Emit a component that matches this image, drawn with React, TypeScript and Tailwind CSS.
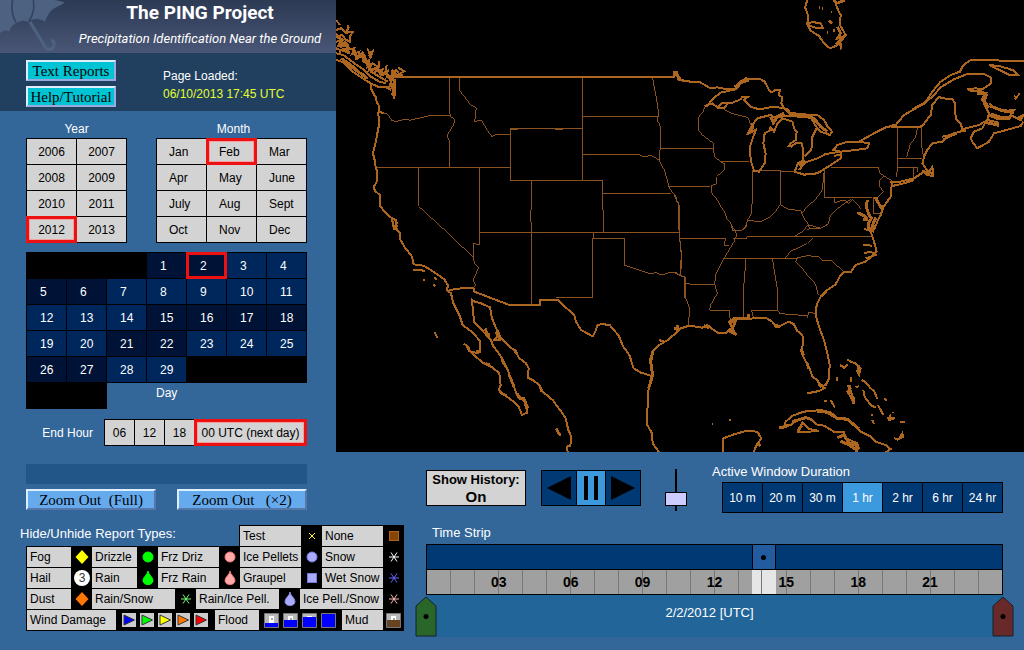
import { useState } from 'react';

const years = ['2006', '2007', '2008', '2009', '2010', '2011', '2012', '2013'];
const months = ['Jan', 'Feb', 'Mar', 'Apr', 'May', 'June', 'July', 'Aug', 'Sept', 'Oct', 'Nov', 'Dec'];
const days = Array.from({ length: 29 }, (_, i) => i + 1);
const quietDays = [1, 2, 5, 6, 15, 16, 17, 18, 21, 22, 26, 27];
const durations = ['10 m', '20 m', '30 m', '1 hr', '2 hr', '6 hr', '24 hr'];
const hours = Array.from({ length: 24 }, (_, i) => i + 1);

const picked =
  'relative z-10 border-2 border-[#ee1111] outline outline-[#ee1111] shadow-[inset_0_0_0_1px_#f4a0a0]';

function Header() {
  return (
    <header>
      <div className="relative h-[53px] overflow-hidden bg-linear-to-b from-[#2d3a54] to-[#495676] text-white">
        <svg className="absolute left-0 top-0" width="70" height="53" viewBox="0 0 210 159" aria-hidden="true">
          <g fill="#4d6180">
            <path d="M0 0H166L194 7C180 20 160 22 150 37C143 46 138 55 135 65C118 54 98 54 84 66C72 60 60 62 48 70C36 76 30 84 28 96C18 88 8 92 0 100Z" />
          </g>
          <path d="M38 0C32 28 38 50 48 68M100 0C104 26 98 48 86 64" fill="none" stroke="#35435f" strokeWidth="5" />
          <path d="M90 66L134 138C142 154 160 150 162 136C163 128 160 122 154 120" fill="none" stroke="#4d6180" strokeWidth="10" />
        </svg>
        <h1 className="relative whitespace-nowrap pl-16 text-center font-['Roboto','Liberation_Sans',sans-serif] text-[19px] font-bold leading-[26px]">
          The PING Project
        </h1>
        <p className="relative whitespace-nowrap pl-16 text-center font-['Roboto','Liberation_Sans',sans-serif] text-[13px] italic leading-[26px]">
          Precipitation Identification Near the Ground
        </p>
      </div>
      <div className="flex h-[58px] bg-[#21405f] pl-[26px] pt-[7px]">
        <div className="flex w-[90px] flex-col gap-[5px] font-['Liberation_Serif',serif] text-[15px] text-black">
          <button className="h-[21px] border-2 border-[#99aadd] border-l-[#ddeeff] border-t-[#ddeeff] bg-[#00c4d4] leading-[16px]">
            Text Reports
          </button>
          <button className="h-[21px] border-2 border-[#99aadd] border-l-[#ddeeff] border-t-[#ddeeff] bg-[#00c4d4] leading-[16px]">
            Help/Tutorial
          </button>
        </div>
        <div className="pl-[47px] pt-[7px] leading-[18px]">
          <p className="text-[12px] text-white">Page Loaded:</p>
          <p className="text-[12px] text-[#e4ff33]">06/10/2013 17:45 UTC</p>
        </div>
      </div>
    </header>
  );
}

function DatePicker() {
  const [year, setYear] = useState('2012');
  const [month, setMonth] = useState('Feb');
  const [day, setDay] = useState(2);

  return (
    <div className="px-[26px] pt-[9px] text-[12px]">
      <div className="flex gap-[29px]">
        <div>
          <h2 className="h-[18px] text-center leading-[18px] text-white">Year</h2>
          <div className="grid w-[101px] grid-cols-2 gap-px bg-black p-px">
            {years.map((y) => (
              <button
                key={y}
                onClick={() => setYear(y)}
                className={`h-[25px] bg-[#d3d3d3] text-center ${y === year ? picked : ''}`}
              >
                {y}
              </button>
            ))}
          </div>
        </div>
        <div>
          <h2 className="h-[18px] pl-1 text-center leading-[18px] text-white">Month</h2>
          <div className="grid w-[151px] grid-cols-3 gap-px bg-black p-px">
            {months.map((m) => (
              <button
                key={m}
                onClick={() => setMonth(m)}
                className={`h-[25px] bg-[#d3d3d3] text-left ${m === month ? `${picked} pl-[10px]` : 'pl-3'}`}
              >
                {m}
              </button>
            ))}
          </div>
        </div>
      </div>

      <div className="mt-[9px] grid w-[281px] grid-cols-7 gap-px bg-black p-px text-white">
        <span className="col-span-3" />
        {days.map((d) => (
          <button
            key={d}
            onClick={() => setDay(d)}
            className={`h-[25px] text-left ${quietDays.includes(d) ? 'bg-[#001236]' : 'bg-[#00275b]'} ${
              d === day ? 'relative z-10 border-2 border-[#ee1111] pl-[11px] outline outline-[#ee1111]' : 'pl-[13px]'
            }`}
          >
            {d}
          </button>
        ))}
      </div>
      <div className="flex">
        <div className="h-[26px] w-[81px] bg-black" />
        <h2 className="pl-[49px] leading-[20px] text-white">Day</h2>
      </div>

      <div className="mt-[10px] flex w-[281px] items-center justify-end">
        <span className="pr-[11px] text-white">End Hour</span>
        <div className="flex gap-px bg-black p-px">
          {['06', '12', '18'].map((h) => (
            <button key={h} className="h-[25px] w-[29px] bg-[#d3d3d3]">
              {h}
            </button>
          ))}
          <button className={`h-[25px] w-[111px] whitespace-nowrap bg-[#d3d3d3] ${picked}`}>00 UTC (next day)</button>
        </div>
      </div>
    </div>
  );
}

function UsMap() {
  return (
    <svg
      className="h-[452px] w-full bg-black"
      viewBox="0 0 688 452"
      preserveAspectRatio="xMidYMid slice"
      fill="none"
      stroke="#ad661f"
      shapeRendering="crispEdges"
      role="img"
      aria-label="Map of the United States"
    >
      {/* Northwest */}
      <g transform="scale(.33333)">
        <g stroke="#8a5220" strokeWidth="3">
          <path d="M130 338L152 342L160 350L168 362L182 364L208 357L222 361L280 347H341M341 231V340L345 350L357 358L352 375L333 408L341 425V501" />
          <path d="M371 231V272L385 290L405 315L421 323L416 365L437 360L444 374L455 392L468 410L480 404L514 402L523 404" />
          <path d="M523 385H739V541H523ZM523 388H545M658 388H682M119 502H523M248 502V619L326 690M431 502V690M739 231V385M739 349H967" />
          <path d="M739 463H910L920 470L945 467L960 473L970 482M949 231L955 262L962 300L969 345L963 360L972 374L973 445L970 460V482L985 510L995 545L1000 565L1020 590L1022 605L1031 616V690" />
          <path d="M973 445H1050M997 559H1050M800 580H1005M739 541H800V600L803 690M586 541V620L584 640L586 690" />
        </g>
        <g strokeWidth="6">
          <path d="M170 231H1014V215H1022L1026 228L1036 240L1050 243" />
          <path d="M106 250V268L113 282L120 292L122 306L130 320L127 338L129 375L124 400L119 428L111 460L117 485L119 502L124 515L122 545L113 562L117 573L132 585V618L150 640L168 655L180 660L182 680L178 690M168 655L174 690M174 655L184 672M130 335L142 340" />
          <path d="M0 180L20 186L50 215L80 235L104 250L130 262L160 262L166 240M0 160L22 165L55 190L85 210L105 230L130 245L150 250" />
          <path d="M15 175L45 195L75 222L95 236M25 182L60 212L88 228" strokeWidth="8" />
          <path d="M0 60L12 75M0 90L15 85L30 98L38 82L34 76M30 98L50 96L42 110V126L28 118L18 104L6 112L0 100M0 125L20 122L16 140L35 135L30 150L55 145L48 162L70 155L66 172L88 168L85 185L100 180L95 200L110 190L125 200L118 215L140 208L138 222L155 212L152 232L170 225L180 210L190 222L205 214L185 202M0 145L14 150L8 165M94 145L100 160L110 153L104 172L98 165M128 184L130 200L120 208M152 195L148 212M70 160L90 190L105 215L130 230L155 245" />
          <path d="M2 108L18 120L10 135L28 128L38 145L20 150L42 160M55 150L62 175L80 160L92 185L80 180M105 190L100 210L125 205L135 225L150 220L165 240L170 215L185 230L200 222" strokeWidth="9" />
          <path d="M162 235L176 240V262L174 296M166 250L172 270L170 282L176 290M150 262L165 268" strokeWidth="8" />
        </g>
      </g>

      {/* Northeast and Great Lakes */}
      <g transform="translate(338) scale(.33333)">
        <g stroke="#8a5220" strokeWidth="3">
          <path d="M92 320L88 335L73 352V390L85 405L118 430V445L122 470L140 485L153 492L152 508L128 530L126 552L112 557L114 580L130 600L140 620L152 635L158 655L172 672L175 690M0 445H118M0 559H108M140 485H226M150 328L172 340L205 348L222 353L230 375L240 382" />
          <path d="M235 513V600L232 640L220 662L215 680L205 690M235 512H320V612M320 514H362M220 662L262 664L290 650L305 635L318 614L345 628L380 632L390 655L405 675L440 685L462 672L470 645L485 630L515 608L530 598M0 582L5 595L15 612V690" />
          <path d="M385 640L397 622L425 598L445 570L451 510M451 510V592H595M470 502H612L618 520L630 528L618 540V560L628 575L610 592L598 594M630 528L655 543M482 594V608L510 600L525 610L535 598L550 612L562 628M598 592V640H618M400 690L410 685M672 385L670 420L672 470L668 532M672 475H745M668 502H730V515M718 502V530M742 378V430L748 470M730 384L725 410L708 435L698 472" />
        </g>
        <g strokeWidth="6">
          <path d="M0 215L10 230L14 240L50 245L75 245L110 265L130 262L150 266L185 268L190 255L215 235L240 238L260 238L272 245L285 270L292 277L305 270L318 270L315 285L325 292L322 310L330 325L348 338L385 343L430 345L450 360L460 378L474 395L468 405L440 395L425 378L415 360L410 345" />
          <path d="M185 268L140 278L115 298L100 318H92L115 310L130 322L145 308L170 310L200 298L205 290L222 290L210 300L218 308L230 320L255 328L300 320L330 325M130 322L150 325L160 312" />
          <path d="M220 405L235 375L250 355L290 345L300 352L320 350L345 348L410 352L430 370M225 400L245 390L228 440L230 480L240 512L255 515L272 490L275 460L268 430L272 400L290 390L288 380L300 395L310 372L325 355L355 365L360 385L368 395L365 420L350 430L345 438L352 440L365 430L383 430L388 450V480L372 490L362 515L390 524L430 520L470 495L500 475V455L455 462L430 475L395 487L375 510M392 470L412 450L415 410L428 385" />
          <path d="M222 395L238 385L235 370" />
          <path d="M335 325L350 342L390 348L420 355L440 380L460 395M185 268L200 248L225 240M182 262L208 240M378 500L390 478M290 350L298 368L310 350L330 340" strokeWidth="9" />
          <path d="M478 450L490 435L520 425L555 425L585 430L580 445L545 450L500 455ZM500 463L480 468M555 425L600 400L635 382L665 375L690 345L725 325L750 312L780 285L800 262L840 238L880 222L930 222L950 232L952 250L925 268L905 265L880 268" />
          <path d="M715 328L755 306L775 275L800 245L830 225L858 215L865 200L875 190L890 180L960 181L1050 184M945 195L975 198L1000 205L1020 212L1033 226L1005 224L980 212Z" />
          <path d="M650 382H730L745 378L758 360L770 345L775 315L795 290L805 295L835 297L843 310L845 355L860 370L865 388L875 395M640 382L660 374" />
          <path d="M875 390L840 400L820 408L805 425L775 430L760 450L750 470L745 490L755 505L765 515L775 500L778 528L760 525L750 515L720 535L680 545L652 545L655 558L690 550L720 540M652 560L650 590L628 622L615 612L608 592M628 622L620 645L612 660L600 690M805 410L830 405M808 418L850 400" />
          <path d="M602 592L615 615L624 630" />
          <path d="M580 600L577 620L583 640L592 655L584 670L582 690M550 638L566 645L580 655M568 658L582 660M606 652L598 668L592 690" strokeWidth="9" />
          <path d="M865 388L915 375L940 360L945 340L930 310L938 285L920 272L890 272L880 266M940 360L975 368L950 372L935 365L925 385L900 395L890 415L898 430L910 445L945 425L960 400L990 392L1040 378L1048 365M945 310L960 325L1000 332L1020 330L1010 345L1040 360L1048 345L1028 355M950 340L985 352L1010 350M1022 298L1038 280M1028 292L1020 288" />
          <path d="M945 345L970 355L1010 354M950 318L985 332L1020 338M938 368L975 376M745 515L778 520M910 280L935 280L925 300L945 322" strokeWidth="9" />
          <path d="M400 0L393 22L402 45L400 72L410 92L435 108L450 130L468 145L485 138L498 130L502 148M510 0L485 10L492 30L500 45L498 75L515 105L500 125M400 72L415 66L440 70L447 85L418 82Z" />
          <path d="M480 0L488 10L512 2M490 80L500 100L490 115L508 110L488 130L505 135M464 62L474 70M458 98h5M476 92h6M470 36h4M435 23h4M444 26h4" strokeWidth="8" />
        </g>
      </g>

      {/* Southwest, Baja and Texas */}
      <g transform="translate(0 225) scale(.33333)">
        <g stroke="#8a5220" strokeWidth="3">
          <path d="M431 22H1031M586 0V237M802 0V22M773 22V40M770 40H865V120L880 125L900 132L925 140L940 146L960 143L975 150L1000 143L1020 143L1035 152L1050 157M770 40V217H660" />
          <path d="M1047 157V220M1031 0V40L1037 90L1034 152M1031 40H1050M310 0L412 97L415 115L428 128L418 150L412 165L418 180L412 190M431 0V60L412 55V95" />
        </g>
        <g strokeWidth="6">
          <path d="M340 195L375 190L412 188L415 200L520 240H612V225H665L690 248L715 270L720 290L735 315L770 334L778 320L785 300L800 297L822 301L848 332L862 365L880 390L893 430L915 443L947 453" />
          <path d="M176 0L184 15L192 25V42L205 65L228 95L233 118L262 122L280 132L297 143L325 163L335 180L334 197L345 205L352 235L370 270L380 300L410 322L432 348V375L425 385L400 378L390 360L383 356M232 135L268 137M260 165h8M295 158L302 165M290 178L298 183M296 322L304 338" />
          <path d="M400 378L440 413L470 428L490 445L494 480L488 495L510 513L530 528L548 545L558 570L573 563L575 545L565 520L545 515L530 475L515 435L495 395L470 360L465 345L440 318L414 290L408 225M405 220L410 228L435 235L462 247L468 280L480 310L490 325L492 345L475 345L488 330L520 365L540 378L548 398L570 415L578 430L575 458L590 465L610 480L620 500L650 525L688 577L697 615L706 635L703 662L693 665L695 682" />
          <path d="M447 310L460 340M448 330L462 328M480 320L490 340M420 378L435 380M450 415L462 420M497 405L510 425M520 450L534 485M545 505L550 520L565 525L572 550M490 500L510 512M535 372L540 385M660 610L673 632M612 485L618 500M390 360L400 372" strokeWidth="8" />
          <path d="M1050 305L1035 310L1025 320L995 345L970 360L950 380L942 405L947 430L950 455L940 480L935 510L934 600L948 625L950 655L970 682M1022 300V315L1035 312M968 345L985 350" />
          <path d="M950 380L944 410L950 450L938 490" strokeWidth="9" />
        </g>
      </g>

      {/* Southeast, Cuba and the Bahamas */}
      <g transform="translate(338 225) scale(.33333)">
        <g stroke="#8a5220" strokeWidth="3">
          <path d="M17 0V40L22 90L18 152L0 143M17 40H155L150 60L165 62M0 22H17M18 152L34 157V215L48 255L42 300M34 176L60 178H122M172 0L182 15L188 30L180 50L165 75L150 100L125 150L122 178L130 205L110 240L107 256H166V278L175 285" />
          <path d="M150 100H370M178 40H218V36H595M175 15L200 18L215 8L218 0M216 100L208 200V275M295 100L312 205L310 256H232L238 275M310 256L318 266L400 272V278L404 262L422 265M358 36L385 20L402 0L410 12L440 10L460 0M415 40L400 55L370 70L350 78L335 98" />
          <path d="M370 100L365 110L385 130L400 150L425 178L433 210M370 98L400 92L435 95L445 105L475 108L508 140" />
        </g>
        <g strokeWidth="6">
          <path d="M0 330L15 315L10 300M15 312L45 302L85 308L100 300L115 312L135 325L155 325L168 312L185 330L175 310L165 290L180 280L200 282L245 280L275 278L295 290L305 305L320 302L345 290L360 298L370 318L385 330L388 350L382 380L390 400L405 425L415 455L430 465L440 485L455 480L465 460L467 420L460 385L450 345L435 305L425 270L428 240L440 215L460 195L485 178L500 150L512 140L530 142L545 120L575 110L608 80L600 50L592 25L585 0M455 488L435 498L400 505M600 0L598 20L570 12M568 60L595 62M570 85L590 80L605 90L575 100" />
          <path d="M0 310L15 312M90 302L105 308M165 295L185 285L180 300L170 320L188 330M185 282L225 280L222 268M382 370L388 392M398 412L405 430M300 300L318 305M435 478L450 485M440 215L455 200" strokeWidth="9" />
          <path d="M330 605L335 590L355 572L390 560L440 555L470 562L490 578L515 580L535 595L560 620L590 635L605 650L635 660L650 672L635 682M330 605L350 600L370 585L395 578L415 585L425 598L450 602L480 620L510 622L515 640L550 655L555 670L545 682M375 620L385 592L405 612L435 618L370 622M148 682V640L180 628L215 618L250 620L262 640L248 660L238 682" />
          <path d="M430 558L460 562L490 580L520 583L555 612M315 608L335 605L345 598M355 590L395 578L412 583M372 618L382 602M490 638L510 630L525 655L545 658L548 675L525 660L500 648M250 655L260 662" strokeWidth="9" />
          <path d="M498 420L510 428L520 418M520 403L530 410L545 415L560 430L555 450L548 435M490 455V468M532 455V470M520 480L530 490L520 500L530 515L540 535L535 510L525 490M545 487L555 483M563 465L575 472L590 490L600 498L610 522M568 495L572 515L590 540L605 548M612 540L628 570M632 520L638 528M650 568L645 585L662 580L640 580M678 590H692M660 640L675 642L685 625L688 635L668 645M595 585L600 597M470 525L483 548M450 528H460M595 568V572M656 560V564M115 598h3M165 585h6" />
          <path d="M555 420V442M525 480L530 505M538 515V538" strokeWidth="9" />
        </g>
      </g>
    </svg>
  );
}

type MarkProps = { kind: string; color?: string; edge?: string };

function Mark({ kind, color = '#ffffff', edge = color }: MarkProps) {
  return (
    <svg width="21" height="20" viewBox="0 0 21 20" className="shrink-0" aria-hidden="true">
      {kind === 'diamond' && <path d="M11 3L17.500 10L11 17L4.500 10Z" fill={color} />}
      {kind === 'circle' && <circle cx="11" cy="10" r="5" fill={color} stroke={edge} />}
      {kind === 'drop' && (
        <path d="M11 3C11.500 7 16 9 16 12.500C16 18 6 18 6 12.500C6 9 10.500 7 11 3Z" fill={color} stroke={edge} />
      )}
      {kind === 'square' && <rect x="6.500" y="5.500" width="9" height="9" fill={color} stroke={edge} />}
      {kind === 'cross' && <path d="M8 7L14 13M14 7L8 13" stroke={color} shapeRendering="crispEdges" />}
      {kind === 'flake' && <path d="M6 10H16M8 5.500L14 14.500M14 5.500L8 14.500" stroke={color} />}
      {kind === 'hail' && (
        <>
          <circle cx="11" cy="10" r="8" fill="#ffffff" />
          <text x="11" y="14" textAnchor="middle" fontSize="12" fill="#333333">
            3
          </text>
        </>
      )}
    </svg>
  );
}

function ReportType({ label, width, children }: { label: string; width: string; children?: React.ReactNode }) {
  return (
    <button className="flex text-left">
      <span className={`h-5 whitespace-nowrap bg-[#d3d3d3] pl-[3px] leading-5 ${width}`}>{label}</span>
      {children}
    </button>
  );
}

function WindArrow({ color }: { color: string }) {
  return (
    <svg width="14" height="14" viewBox="0 0 14 14" className="bg-[#cccccc]" aria-hidden="true">
      <path d="M2 2L12.500 7L2 12Z" fill={color} stroke="#333333" strokeWidth="1" />
    </svg>
  );
}

function FloodMark({ level, color = '#0000ff' }: { level: number; color?: string }) {
  return (
    <svg width="15" height="15" viewBox="0 0 15 15" aria-hidden="true">
      <path d="M.5.5H14.500V14.500H.5Z" fill="#b8b8b8" stroke="#777777" />
      <path d="M5 3H10V10H5Z" fill="#ffffff" />
      <path d="M7 5H9V7H7Z" fill="#aaaaaa" />
      <rect x="1" y={14 - level} width="13" height={level} fill={color} />
    </svg>
  );
}

function ReportTypes() {
  return (
    <section className="ml-5 mt-[15px] w-[384px] text-[12px]">
      <div className="flex justify-between">
        <h2 className="text-[13px] leading-[18px] text-white">Hide/Unhide Report Types:</h2>
        <div className="flex bg-black pl-px pt-px">
          <ReportType label="Test" width="w-[61px]"><Mark kind="cross" color="#ffff33" /></ReportType>
          <ReportType label="None" width="w-[61px]"><Mark kind="square" color="#884400" edge="#aa6622" /></ReportType>
        </div>
      </div>
      <div className="ml-[6px] bg-black pb-px pl-px">
        <div className="flex pt-px">
          <ReportType label="Fog" width="w-[44px]"><Mark kind="diamond" color="#ffff00" /></ReportType>
          <ReportType label="Drizzle" width="w-[45px]"><Mark kind="circle" color="#00ff00" /></ReportType>
          <ReportType label="Frz Driz" width="w-[61px]"><Mark kind="circle" color="#ffaaaa" edge="#ee7777" /></ReportType>
          <ReportType label="Ice Pellets" width="w-[61px]"><Mark kind="circle" color="#aaaaff" edge="#7777dd" /></ReportType>
          <ReportType label="Snow" width="w-[61px]"><Mark kind="flake" /></ReportType>
        </div>
        <div className="flex pt-px">
          <ReportType label="Hail" width="w-[44px]"><Mark kind="hail" /></ReportType>
          <ReportType label="Rain" width="w-[45px]"><Mark kind="drop" color="#00ff00" /></ReportType>
          <ReportType label="Frz Rain" width="w-[61px]"><Mark kind="drop" color="#ffaaaa" edge="#ee7777" /></ReportType>
          <ReportType label="Graupel" width="w-[61px]"><Mark kind="square" color="#aaaaff" edge="#7777dd" /></ReportType>
          <ReportType label="Wet Snow" width="w-[61px]"><Mark kind="flake" color="#6666ff" /></ReportType>
        </div>
        <div className="flex pt-px">
          <ReportType label="Dust" width="w-[44px]"><Mark kind="diamond" color="#ff7700" /></ReportType>
          <ReportType label="Rain/Snow" width="w-[83px]"><Mark kind="flake" color="#77ff77" /></ReportType>
          <ReportType label="Rain/Ice Pell." width="w-[83px]"><Mark kind="drop" color="#aaaaff" edge="#8888dd" /></ReportType>
          <ReportType label="Ice Pell./Snow" width="w-[83px]"><Mark kind="flake" color="#ffbbbb" /></ReportType>
        </div>
        <div className="flex pt-px">
          <ReportType label="Wind Damage" width="w-[89px]">
            <span className="flex h-5 w-[99px] items-center gap-1 pl-[6px]">
              <WindArrow color="#0000ff" />
              <WindArrow color="#00ff00" />
              <WindArrow color="#ffff00" />
              <WindArrow color="#ff7700" />
              <WindArrow color="#ff0000" />
            </span>
          </ReportType>
          <ReportType label="Flood" width="w-[44px]">
            <span className="flex h-5 w-[83px] items-center gap-1 pl-[5px]">
              <FloodMark level={4} />
              <FloodMark level={7} />
              <FloodMark level={10} />
              <FloodMark level={13} />
            </span>
          </ReportType>
          <ReportType label="Mud" width="w-[41px]">
            <span className="flex h-5 w-[21px] items-center pl-[3px]">
              <FloodMark level={7} color="#664422" />
            </span>
          </ReportType>
        </div>
      </div>
    </section>
  );
}

function Playback() {
  const [duration, setDuration] = useState('1 hr');

  return (
    <div className="flex h-[58px] items-start">
      <button className="mt-[6px] h-[36px] w-[100px] border border-black bg-[#d3d3d3] font-bold">
        <span className="block text-[13px] leading-[16px]">Show History:</span>
        <span className="block text-[15px] leading-[17px]">On</span>
      </button>
      <div className="ml-[15px] mt-[6px] flex gap-px border border-black bg-black">
        <button aria-label="Step back" className="flex h-[34px] w-[34px] items-center justify-center bg-[#003973]">
          <svg width="24" height="24" viewBox="0 0 24 24"><path d="M24 0V24L0 12Z" /></svg>
        </button>
        <button aria-label="Pause" className="flex h-[34px] w-[28px] items-center justify-center gap-[6px] bg-[#3b99de]">
          <span className="h-6 w-1 bg-black" />
          <span className="h-6 w-1 bg-black" />
        </button>
        <button aria-label="Step forward" className="flex h-[34px] w-[34px] items-center justify-center bg-[#003973]">
          <svg width="24" height="24" viewBox="0 0 24 24"><path d="M0 0V24L24 12Z" /></svg>
        </button>
      </div>
      <input
        type="range"
        aria-label="Playback speed"
        defaultValue={81}
        className="ml-6 mt-[5px] h-[42px] w-[22px] appearance-none bg-[linear-gradient(black,black)] bg-[length:2px_100%] bg-center bg-no-repeat [writing-mode:vertical-lr] [&::-webkit-slider-thumb]:h-[14px] [&::-webkit-slider-thumb]:w-[22px] [&::-webkit-slider-thumb]:appearance-none [&::-webkit-slider-thumb]:border [&::-webkit-slider-thumb]:border-black [&::-webkit-slider-thumb]:bg-[#ccccff]"
      />
      <div className="ml-auto">
        <h2 className="-ml-[10px] h-[18px] text-[13px] leading-[15px] text-white">Active Window Duration</h2>
        <div className="flex gap-px border border-black bg-black text-[12px] text-white">
          {durations.map((d) => (
            <button
              key={d}
              onClick={() => setDuration(d)}
              className={`h-[29px] w-[39px] whitespace-nowrap ${d === duration ? 'bg-[#3b99de]' : 'bg-[#003973]'}`}
            >
              {d}
            </button>
          ))}
        </div>
      </div>
    </div>
  );
}

function TimeHandle({ label, className, fill }: { label: string; className: string; fill: string }) {
  return (
    <button aria-label={label} className={`absolute top-[52px] ${className}`}>
      <svg width="22" height="41" viewBox="0 0 22 41" className="block">
        <path d="M11 1L21 10V40H1V10Z" fill={fill} stroke="#11222e" />
        <circle cx="11" cy="20.500" r="2.500" />
      </svg>
    </button>
  );
}

function TimeStrip() {
  return (
    <section>
      <h2 className="pl-[6px] pt-[2px] text-[13px] leading-[18px] text-white">Time Strip</h2>
      <div className="relative mt-[2px]">
        <div className="relative border border-black">
          <div className="h-[24px] bg-[#003973]" />
          <div className="flex h-[25px] border-t border-black">
            {hours.map((h) => (
              <div
                key={h}
                className={`relative flex-1 bg-[#a0a0a0] ${h < 24 ? 'border-r border-[#777777]' : ''}`}
              />
            ))}
          </div>
          {/* Active window */}
          <div className="absolute left-[56.500%] top-0 flex h-full w-[4.200%] flex-col">
            <div className="flex h-[24px] items-center justify-center border-x border-black bg-[#225ba0]">
              <span className="size-[5px] rounded-full bg-black" />
            </div>
            <div className="mt-px flex flex-1 bg-[#e6e6e6]">
              <span className="w-[42%] border-r border-[#777777]" />
            </div>
          </div>
          <div className="absolute inset-x-0 bottom-0 flex h-[24px] text-[14px] font-bold leading-[24px]">
            <span className="w-[6.250%]" />
            {['03', '06', '09', '12', '15', '18', '21'].map((h) => (
              <span key={h} className="w-[12.500%] text-center">
                {h}
              </span>
            ))}
          </div>
        </div>
        <div className="h-[42px] bg-[#226699] pr-[10px] pt-[9px] text-center text-[13px] leading-[18px] text-white">
          2/2/2012 [UTC]
        </div>
        <TimeHandle label="Start time" className="-left-[11px]" fill="#2a6629" />
        <TimeHandle label="End time" className="-right-[11px]" fill="#692929" />
      </div>
    </section>
  );
}

export default function App() {
  return (
    <main className="min-h-screen bg-[#336699] font-['Liberation_Sans',Arial,sans-serif] text-black">
      <div className="flex">
        <aside className="w-[336px] shrink-0">
          <Header />
          <DatePicker />
        </aside>
        <div className="min-w-0 flex-1">
          <UsMap />
        </div>
      </div>
      <div className="flex">
        <div className="w-[404px] shrink-0 pt-3">
          <div className="ml-[26px] w-[281px]">
            <div className="h-5 bg-[#225588]" />
            <div className="mt-[5px] flex justify-between font-['Liberation_Serif',serif] text-[15px]">
              <button className="h-[21px] w-[130px] whitespace-pre border-2 border-[#5577aa] border-l-[#ddeeff] border-t-[#ddeeff] bg-[#66aaee] leading-[16px]">
                {'Zoom Out  (Full)'}
              </button>
              <button className="h-[21px] w-[130px] whitespace-pre border-2 border-[#5577aa] border-l-[#ddeeff] border-t-[#ddeeff] bg-[#66aaee] leading-[16px]">
                {'Zoom Out   (×2)'}
              </button>
            </div>
          </div>
          <ReportTypes />
        </div>
        <div className="min-w-0 flex-1 pl-[22px] pr-[21px] pt-3">
          <Playback />
          <TimeStrip />
        </div>
      </div>
    </main>
  );
}
